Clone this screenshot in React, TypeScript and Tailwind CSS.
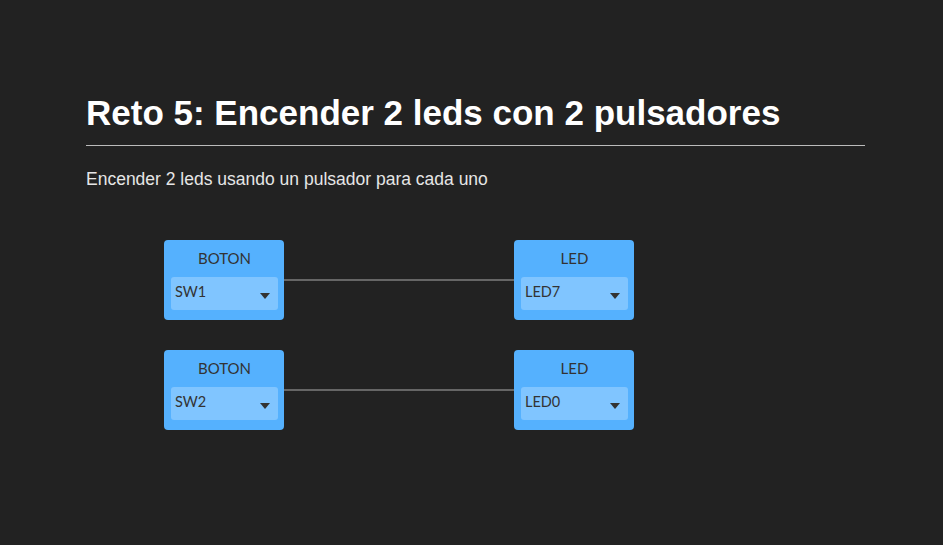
import React from 'react';

interface Link {
  source: { title: string; value: string };
  target: { title: string; value: string };
}

const links: Link[] = [
  { source: { title: 'BOTON', value: 'SW1' }, target: { title: 'LED', value: 'LED7' } },
  { source: { title: 'BOTON', value: 'SW2' }, target: { title: 'LED', value: 'LED0' } },
];

const Node: React.FC<{ title: string; value: string }> = ({ title, value }) => (
  <div className="w-[120px] h-[80px] bg-[#55b1fe] rounded-[4px] pt-[9px] pr-[6px] pl-[7px] font-['Lato',sans-serif] text-[#333]">
    <div className="text-center text-[15px] leading-[18px] h-[28px]">{title}</div>
    <div className="h-[33px] bg-[#80c5ff] rounded-[3px] flex items-center justify-between pl-[4px] pr-[8px] text-[14.5px]">
      <span className="-mt-[3px]">{value}</span>
      <svg width="10" height="6" viewBox="0 0 10 6" className="mt-[4px]">
        <path d="M0 0 L10 0 L5 6 Z" fill="#333" />
      </svg>
    </div>
  </div>
);

export default function App() {
  return (
    <div className="w-[943px] h-[545px] bg-[#222222] px-[86px] pt-[92px] font-['Liberation_Sans',Arial,sans-serif]">
      <h1 className="text-white font-bold text-[35px] leading-[42px] w-[779px] pb-[11px] border-b border-[#bbbbbb]">
        Reto 5: Encender 2 leds con 2 pulsadores
      </h1>
      <p className="text-[#e6e6e6] text-[17.5px] leading-[22px] mt-[22px]">Encender 2 leds usando un pulsador para cada uno</p>
      <div className="mt-[50px] pl-[78px] flex flex-col gap-[30px]">
        {links.map((link, index) => (
          <div key={index} className="flex items-center">
            <Node title={link.source.title} value={link.source.value} />
            <div className="w-[230px] h-[2px] bg-[#666666]" />
            <Node title={link.target.title} value={link.target.value} />
          </div>
        ))}
      </div>
    </div>
  );
}
